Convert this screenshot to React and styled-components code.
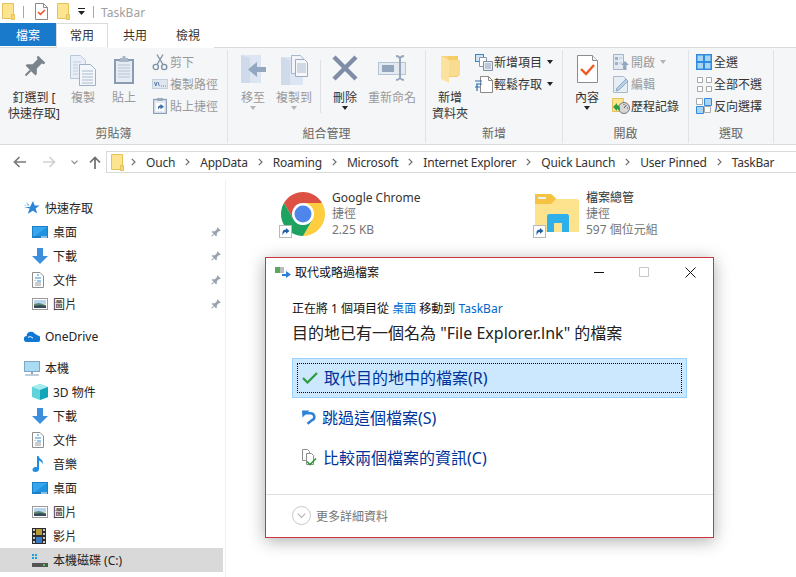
import React from "react";
import styled, { createGlobalStyle } from "styled-components";

const GlobalStyle = createGlobalStyle`
html, body {
  margin: 0;
  padding: 0;
  background: #fff;
  overflow: hidden;
}
body {
  font-family: "Noto Sans", "Noto Sans CJK TC", sans-serif;
  font-size: 12px;
  color: #333;
}
svg { display: block; }
`;

const Page = styled.div`
  position: relative;
  width: 796px;
  height: 577px;
  overflow: hidden;
  display: flex;
  flex-direction: column;
`;

/* title bar */
const TitleBar = styled.div`
  height: 23px;
  display: flex;
  align-items: center;
  padding-left: 2px;
  color: #a0a0a0;
`;
const TitleSep = styled.div`
  width: 1px;
  height: 12px;
  background: #a8a8a8;
  margin: 0 ${(p) => p.$right}px 0 ${(p) => p.$left}px;
`;
const QuickIcon = styled.div`
  margin-right: ${(p) => p.$right}px;
`;
const TitleText = styled.span`
  padding-top: 1px;
`;

/* tabs */
const TabRow = styled.div`
  height: 24px;
  display: flex;
  position: relative;
  z-index: 1;
`;
const FileTab = styled.div`
  width: 56px;
  height: 23px;
  background: #1979ca;
  color: #fff;
  display: flex;
  align-items: center;
  justify-content: center;
`;
const Tab = styled.div`
  width: ${(p) => p.$w}px;
  height: 25px;
  box-sizing: border-box;
  display: flex;
  align-items: center;
  justify-content: center;
  padding-bottom: 2px;
  color: #333;
  background: #fff;
  border: 1px solid ${(p) => (p.$active ? "#dadbdc" : "transparent")};
  border-bottom: 1px solid ${(p) => (p.$active ? "#f5f6f7" : "transparent")};
`;

/* ribbon */
const Ribbon = styled.div`
  height: 98px;
  box-sizing: border-box;
  background: #f5f6f7;
  border-top: 1px solid #dadbdc;
  border-bottom: 1px solid #dadbdc;
  display: flex;
  padding: 2px 0 1px;
`;
const Group = styled.div`
  width: ${(p) => p.$w}px;
  box-sizing: border-box;
  flex: none;
  display: flex;
  flex-direction: column;
  border-right: 1px solid #e1e3e6;
`;
const GroupBody = styled.div`
  flex: 1;
  display: flex;
  padding: 1px 0 0 ${(p) => p.$left || 0}px;
`;
const GroupLabel = styled.div`
  height: 17px;
  line-height: 16px;
  text-align: center;
  color: #666;
`;
const LargeButton = styled.div`
  width: ${(p) => p.$w}px;
  flex: none;
  display: flex;
  flex-direction: column;
  align-items: center;
  padding-top: 4px;
  color: ${(p) => (p.$off ? "#9a9a9a" : "#333")};
`;
const LargeIcon = styled.div`
  height: 35px;
`;
const LargeText = styled.div`
  line-height: 16px;
  white-space: nowrap;
  text-align: center;
`;
const Caret = styled.span`
  display: inline-block;
  width: 0;
  height: 0;
  border-left: 3.5px solid transparent;
  border-right: 3.5px solid transparent;
  border-top: 4px solid ${(p) => (p.$off ? "#b4b4b4" : "#222")};
  margin-left: ${(p) => p.$left || 0}px;
  vertical-align: middle;
`;
const RibbonSep = styled.div`
  width: 1px;
  height: 53px;
  background: #dfe1e4;
  margin: 9px 0 0 10px;
  flex: none;
`;
const SmallColumn = styled.div`
  display: flex;
  flex-direction: column;
`;
const SmallRow = styled.div`
  height: 22px;
  display: flex;
  align-items: center;
  white-space: nowrap;
  color: ${(p) => (p.$off ? "#9a9a9a" : "#333")};
`;
const SmallIcon = styled.div`
  width: 20px;
  flex: none;
  display: flex;
  justify-content: center;
`;

/* address bar */
const AddressRow = styled.div`
  height: 35px;
  display: flex;
  align-items: flex-start;
  padding-top: 6px;
  box-sizing: border-box;
`;
const NavButtons = styled.div`
  width: 106px;
  flex: none;
  height: 22px;
  display: flex;
  align-items: center;
  padding-left: 13px;
  box-sizing: border-box;
`;
const NavIcon = styled.div`
  margin-right: ${(p) => p.$right}px;
`;
const AddressBox = styled.div`
  flex: 1;
  height: 22px;
  box-sizing: border-box;
  border: 1px solid #d9d9d9;
  border-right: 0;
  display: flex;
  align-items: center;
  padding-left: 4px;
`;
const Crumb = styled.span`
  white-space: nowrap;
  color: #333;
  letter-spacing: -0.2px;
`;
const CrumbArrow = styled.div`
  margin: 0 10px 0 ${(p) => p.$left || 10}px;
`;

/* main area */
const Main = styled.div`
  flex: 1;
  display: flex;
  min-height: 0;
`;
const Sidebar = styled.div`
  width: 226px;
  flex: none;
  box-sizing: border-box;
  border-right: 1px solid #f0f0f0;
  padding: 16px 2px 0 0;
  display: flex;
  flex-direction: column;
`;
const NavRow = styled.div`
  height: 24px;
  flex: none;
  display: flex;
  align-items: center;
  padding-left: ${(p) => (p.$sub ? 32 : 24)}px;
  background: ${(p) => (p.$selected ? "#d9d9d9" : "transparent")};
  margin-top: ${(p) => (p.$section ? 8 : 0)}px;
  color: #222;
`;
const NavIconBox = styled.div`
  width: 21px;
  flex: none;
`;
const NavLabel = styled.span`
  flex: 1;
  white-space: nowrap;
`;
const NavPin = styled.div`
  width: 13px;
`;

const Content = styled.div`
  flex: 1;
  display: grid;
  grid-template-columns: 254px 200px;
  align-content: start;
  padding: 12px 0 0 55px;
`;
const Tile = styled.div`
  display: flex;
  gap: 7px;
`;
const TileIcon = styled.div`
  position: relative;
  width: 44px;
  height: 46px;
`;
const ShortcutBadge = styled.div`
  position: absolute;
  left: -2px;
  bottom: 0;
`;
const TileText = styled.div`
  margin-top: -2px;
  line-height: 16px;
  color: #757575;
`;
const TileName = styled.div`
  color: #333;
`;

/* dialog over the explorer window */
const Dialog = styled.div`
  position: absolute;
  left: 265px;
  top: 257px;
  width: 449px;
  height: 281px;
  box-sizing: border-box;
  background: #fff;
  border: 1px solid #c9383f;
  box-shadow: 0 3px 16px rgba(0, 0, 0, 0.32);
  display: flex;
  flex-direction: column;
`;
const DialogTitle = styled.div`
  height: 28px;
  display: flex;
  align-items: center;
  padding-left: 9px;
  color: #111;
`;
const DialogTitleText = styled.span`
  flex: 1;
  margin-left: 4px;
`;
const WindowButton = styled.div`
  width: 14px;
  display: flex;
  justify-content: center;
  margin-right: ${(p) => p.$right}px;
`;
const DialogBody = styled.div`
  flex: 1;
  padding: 14px 26px 0;
  display: flex;
  flex-direction: column;
`;
const StatusLine = styled.div`
  line-height: 18px;
  color: #111;
`;
const LinkText = styled.span`
  color: #0066cc;
`;
const Heading = styled.div`
  margin-top: 4px;
  font-size: 16px;
  line-height: 22px;
  color: #222;
`;
const Options = styled.div`
  margin-top: 14px;
  display: flex;
  flex-direction: column;
`;
const Option = styled.div`
  position: relative;
  height: 40px;
  box-sizing: border-box;
  display: flex;
  align-items: center;
  padding: 0 0 2px 9px;
  gap: 6px;
  font-size: 16px;
  color: #003399;
  background: ${(p) => (p.$active ? "#cce8ff" : "transparent")};
  border: 1px solid ${(p) => (p.$active ? "#99d1ff" : "transparent")};
`;
const FocusRing = styled.div`
  position: absolute;
  inset: 4px;
  border: 1px dotted #000;
`;
const DialogFooter = styled.div`
  height: 43px;
  box-sizing: border-box;
  border-top: 1px solid #dfdfdf;
  display: flex;
  align-items: center;
  padding: 0 0 1px 26px;
  gap: 5px;
  color: #757575;
`;
const MoreCircle = styled.div`
  width: 19px;
  height: 19px;
  box-sizing: border-box;
  border: 1px solid #c8c8c8;
  border-radius: 50%;
  display: flex;
  align-items: center;
  justify-content: center;
`;

/* ---- icons ---- */
const FolderSmall = () => (
  <svg width="13" height="17" viewBox="0 0 13 17">
    <path d="M.5.5h11v15H.5z" fill="#fde590" stroke="#e3c25c" />
    <path d="M9.5 11.5h3v5h-3z" fill="#f7d774" stroke="#e3c25c" />
  </svg>
);
const CheckDoc = () => (
  <svg width="13" height="17" viewBox="0 0 13 17">
    <path d="M.5.5h8l4 4v12H.5z" fill="#fff" stroke="#8a8a8a" />
    <path d="M8.5.5v4h4" fill="none" stroke="#8a8a8a" />
    <path d="M3 9l2.4 2.4L10 7" fill="none" stroke="#e8562a" strokeWidth="1.6" />
  </svg>
);
const QuickDown = () => (
  <svg width="8" height="7" viewBox="0 0 8 7">
    <path d="M0 0h7v1H0z" fill="#222" />
    <path d="M0 3h7L3.5 7z" fill="#222" />
  </svg>
);
const PinIcon = ({ size = 24, color = "#7b838c" }) => (
  <svg width={size} height={size} viewBox="0 0 24 24">
    <g transform="rotate(45 12 12)" fill={color}>
      <path d="M7 1h10v2l-2 1v7l4 4v2H5v-2l4-4V4L7 3z" />
      <path d="M11 17h2v7h-2z" />
    </g>
  </svg>
);
const CopyIcon = () => (
  <svg width="26" height="31" viewBox="0 0 26 31">
    <path d="M.5.5h10l5 5v18H.5z" fill="#e8eef6" stroke="#b9c7d9" />
    <path d="M9.5 9.5h11l5 5v16h-16z" fill="#f3f6fa" stroke="#9fb1c8" />
    <path d="M12 16h11M12 19h11M12 22h11M12 25h11M12 28h11" stroke="#a9bace" />
    <path d="M3 7h8M3 10h5M3 13h5M3 16h5M3 19h5" stroke="#c2cfdf" />
  </svg>
);
const PasteIcon = () => (
  <svg width="22" height="30" viewBox="0 0 22 30">
    <rect x="1" y="4" width="20" height="25" fill="#8a9bb4" />
    <rect x="3" y="6" width="16" height="21" fill="#e6ecf4" />
    <path d="M5 10h12M5 13h12M5 16h12M5 19h12M5 22h12" stroke="#b6c4d6" />
    <path d="M7 5V3h2.5V1h3v2H15v2l1 2H6z" fill="#aab6c7" />
  </svg>
);
const ScissorsIcon = () => (
  <svg width="16" height="17" viewBox="0 0 16 17" fill="none" stroke="#8a97a8" strokeWidth="1.4">
    <circle cx="3.8" cy="13" r="2.6" stroke="#7f90a8" />
    <circle cx="12.2" cy="13" r="2.6" stroke="#7f90a8" />
    <path d="M5 10.6L11 .5M11 10.6L5 .5" />
  </svg>
);
const PathIcon = () => (
  <svg width="16" height="10" viewBox="0 0 16 10">
    <rect x=".5" y=".5" width="15" height="9" fill="#dfe6ef" stroke="#c3cfdd" />
    <path d="M2.5 3l1.3 4L5 3M6 3l1.3 4M9 7h.9M11 7h.9M13 7h.9" stroke="#5c7ea8" fill="none" />
  </svg>
);
const PasteLinkIcon = () => (
  <svg width="14" height="16" viewBox="0 0 14 16">
    <rect x=".5" y="1.5" width="13" height="14" fill="#e6ecf4" stroke="#8fa0b8" strokeWidth="1.4" />
    <path d="M4 0h6v3H4z" fill="#9daabc" />
    <rect x="3" y="5" width="8" height="8" fill="#fff" />
    <path d="M5 12V9.5C5 8 6 7.5 7.5 7.5V6L11 8.7 7.5 11.3V9.6C6.3 9.6 5.8 10.4 5 12z" fill="#3a6ea5" />
  </svg>
);
const MoveIcon = () => (
  <svg width="27" height="28" viewBox="0 0 27 28">
    <path d="M1 0h20v28H1z" fill="#dce5f1" />
    <path d="M1 0l9 3v25H1z" fill="#cfdbeb" />
    <path d="M26 12h-9V7L8 14.5l9 7.5v-5h9z" fill="#93a7c1" />
  </svg>
);
const CopyToIcon = () => (
  <svg width="27" height="30" viewBox="0 0 27 30">
    <path d="M0 2h22v28H0z" fill="#dce5f1" />
    <path d="M0 2l9 3v25H0z" fill="#cfdbeb" />
    <path d="M10.5.5h9l3 3v15h-12z" fill="#f1f4f9" stroke="#a7b7cc" />
    <path d="M14.5 4.5h9l3 3v14h-12z" fill="#f5f7fb" stroke="#98abc4" />
    <path d="M16 9h9M16 11h9M16 13h9M16 15h9M16 17h9" stroke="#a9bace" />
  </svg>
);
const DeleteIcon = () => (
  <svg width="26" height="26" viewBox="0 0 26 26">
    <path d="M2 2l22 22M24 2L2 24" stroke="#7f8ea6" strokeWidth="4.4" />
  </svg>
);
const RenameIcon = () => (
  <svg width="28" height="26" viewBox="0 0 28 26">
    <rect x=".5" y="7.5" width="27" height="12" fill="#e4eaf2" stroke="#b7c4d5" />
    <rect x="4" y="10" width="12" height="7" fill="#93a5bd" />
    <path d="M18 1c2 0 3 .6 4 2 1-1.4 2-2 4-2M22 3v20M18 25c2 0 3-.6 4-2 1 1.4 2 2 4 2" fill="none" stroke="#95a6bc" strokeWidth="2" />
  </svg>
);
const NewFolderIcon = () => (
  <svg width="21" height="28" viewBox="0 0 21 28">
    <path d="M1 1h17v20H8z" fill="#f5d37c" />
    <path d="M18 1v21H8V1z" fill="#f4cd68" />
    <path d="M1 1l8 4v23L1 24z" fill="#fbe39f" />
    <path d="M9 5h11v16H9z" fill="#f8dc8f" />
  </svg>
);
const NewItemIcon = () => (
  <svg width="18" height="17" viewBox="0 0 18 17">
    <rect x=".5" y=".5" width="8" height="7" fill="#cfe4f7" stroke="#3f83c2" />
    <path d="M4.5 3.5h7v9h-7z" fill="#fff" stroke="#8796a8" />
    <path d="M8.5 7.5h9v9h-9z" fill="#e9eef5" stroke="#7f8ea3" />
    <path d="M10 10h6M10 12h6M10 14h6" stroke="#93a3b7" />
  </svg>
);
const EasyAccessIcon = () => (
  <svg width="18" height="17" viewBox="0 0 18 17">
    <path d="M5.5.5h8l4 4v12h-12z" fill="#fff" stroke="#8a8a8a" />
    <path d="M13.5.5v4h4" fill="none" stroke="#8a8a8a" />
    <path d="M0 5h7M1 8h6M0 11h5M2 8v7" stroke="#2a6fb5" strokeWidth="1.2" />
  </svg>
);
const PropertiesIcon = () => (
  <svg width="21" height="28" viewBox="0 0 21 28">
    <path d="M.5.5h15l5 5v22H.5z" fill="#fff" stroke="#8c8c8c" />
    <path d="M15.5.5v5h5" fill="#eee" stroke="#8c8c8c" />
    <path d="M4 14l5 5 8-9" fill="none" stroke="#ee5a24" strokeWidth="2.4" />
  </svg>
);
const OpenIcon = () => (
  <svg width="16" height="16" viewBox="0 0 16 16">
    <path d="M.5.5h10v15H.5z" fill="#e4eaf3" stroke="#a3b3c8" />
    <path d="M2 3h3v3H2zM2 8h3v3H2z" fill="#9fb0c6" />
    <path d="M6 4h3M6 9h3" stroke="#b3c0d1" />
    <path d="M12 7l4 4h-2.5v5h-3v-5H8z" fill="#93a7c1" />
  </svg>
);
const EditIcon = () => (
  <svg width="16" height="17" viewBox="0 0 16 17">
    <path d="M.5.5h10l4 4v12H.5z" fill="#e7edf5" stroke="#a9b9cd" />
    <path d="M3 15l1-3 9-9 2 2-9 9z" fill="#b4d0ea" stroke="#90a6c1" />
  </svg>
);
const HistoryIcon = () => (
  <svg width="18" height="16" viewBox="0 0 18 16">
    <path d="M.5.5h11v13H.5z" fill="#fde590" stroke="#e3c25c" />
    <circle cx="12" cy="10" r="5.5" fill="#d7d7d7" stroke="#7a7a7a" />
    <path d="M12 10l2.5-3M12 6v1M15 10h1" stroke="#555" />
    <path d="M8 11a4 4 0 0 0-3-4V5L1 9l4 4v-2c1 0 2 1 3 2z" fill="#2f9e3f" />
  </svg>
);
const SelectInvert = () => (
  <svg width="16" height="16" viewBox="0 0 16 16" strokeWidth="1">
    <path d="M.5.5h6v6h-6zM8.5 8.5h6v6h-6z" fill="#fff" stroke="#a9a9a9" />
    <path d="M8.5.5h7v7h-7zM.5 8.5h7v7h-7z" fill="#a9d5f5" stroke="#2e8be0" />
  </svg>
);
const SelectAll = () => (
  <svg width="16" height="16" viewBox="0 0 16 16">
    <rect width="16" height="16" fill="#2e8be0" />
    <path d="M1.5 1.5H7V7H1.5zM9 1.5h5.5V7H9zM1.5 9H7v5.5H1.5zM9 9h5.5v5.500H9z" fill="#a9d5f5" />
  </svg>
);
const SelectNone = () => (
  <svg width="15" height="15" viewBox="0 0 15 15" fill="#fff" stroke="#a9a9a9">
    <path d="M.5.5h5v5h-5zM9.5.5h5v5h-5zM.5 9.5h5v5h-5zM9.5 9.5h5v5h-5z" />
  </svg>
);
const ArrowLeft = ({ color = "#7a7a7a", flip }) => (
  <svg width="13" height="12" viewBox="0 0 13 12" style={flip ? { transform: "scaleX(-1)" } : undefined}>
    <path d="M13 6H2M6.5 1l-5 5 5 5" fill="none" stroke={color} strokeWidth="1.7" />
  </svg>
);
const ChevronDown = () => (
  <svg width="7" height="5" viewBox="0 0 7 5">
    <path d="M.5.7l3 3 3-3" fill="none" stroke="#8a8a8a" strokeWidth="1.2" />
  </svg>
);
const ArrowUp = () => (
  <svg width="12" height="13" viewBox="0 0 12 13">
    <path d="M6 13V2M1 6.5l5-5 5 5" fill="none" stroke="#6d6d6d" strokeWidth="1.7" />
  </svg>
);
const CrumbChevron = () => (
  <svg width="5" height="8" viewBox="0 0 5 8">
    <path d="M.8.8L4 4 .8 7.2" fill="none" stroke="#6d6d6d" strokeWidth="1.2" />
  </svg>
);
const StarIcon = () => (
  <svg width="16" height="14" viewBox="0 0 16 14">
    <path d="M9 0l1.7 4.6h4.800l-3.800 3 1.400 5-4.100-2.900-5.300 3 2-5.100L0 6h6z" fill="#2c86d8" />
    <path d="M2 1l4 3.500H3.500zM0 3.500l3 1.500H1z" fill="#7fbcf0" />
  </svg>
);
const DesktopIcon = () => (
  <svg width="16" height="12" viewBox="0 0 16 12">
    <rect width="16" height="12" fill="#1e7fc9" />
    <path d="M1 1h14v9H1z" fill="#36a6ee" />
    <path d="M15 1v9H3z" fill="#1f93de" />
    <path d="M9 11h6" stroke="#fff" />
  </svg>
);
const DownloadIcon = () => (
  <svg width="16" height="16" viewBox="0 0 16 16">
    <path d="M5 0h6v8h5l-8 8-8-8h5z" fill="#3d8fdc" />
  </svg>
);
const DocIcon = () => (
  <svg width="12" height="16" viewBox="0 0 12 16">
    <path d="M.5.5H8L11.500 4v11.500H.5z" fill="#fff" stroke="#8e8e8e" />
    <path d="M5 3h2M3 6h6M5 9h4" stroke="#2e8bd8" />
    <path d="M3 8v1M3 11h6M3 13h6" stroke="#9a9a9a" />
  </svg>
);
const PictureIcon = () => (
  <svg width="16" height="12" viewBox="0 0 16 12">
    <rect x=".5" y=".5" width="15" height="11" fill="#fff" stroke="#9a9a9a" />
    <path d="M2 2h12v4H2z" fill="#b8d5ee" />
    <path d="M2 6l5-1 7 2v3H2z" fill="#5f8a72" />
    <path d="M2 8l6-1 6 1v2H2z" fill="#34495c" />
  </svg>
);
const CloudIcon = () => (
  <svg width="16" height="11" viewBox="0 0 16 11">
    <path d="M3 11a3 3 0 0 1-.4-6A4.500 4.500 0 0 1 11 3a3.600 3.600 0 0 1 2.500 1.600A3.200 3.200 0 0 1 13 11z" fill="#0f78d4" />
    <path d="M4 6.200a4 4 0 0 1 5 1" fill="none" stroke="#fff" />
  </svg>
);
const MonitorIcon = () => (
  <svg width="16" height="15" viewBox="0 0 16 15">
    <rect x=".5" y=".5" width="15" height="10" fill="#a9dbf3" stroke="#7fa6c4" />
    <path d="M7 11h2v2H7z" fill="#8ea7bb" />
    <path d="M1 14h14" stroke="#a4b8c8" strokeWidth="1.4" />
  </svg>
);
const CubeIcon = () => (
  <svg width="16" height="16" viewBox="0 0 16 16">
    <path d="M8 0l8 3v10l-8 3-8-3V3z" fill="#5fd2da" />
    <path d="M8 0l8 3-8 3-8-3z" fill="#a5ecef" />
    <path d="M8 6l8-3v10l-8 3z" fill="#14a5b8" />
  </svg>
);
const NoteIcon = () => (
  <svg width="12" height="16" viewBox="0 0 12 16">
    <path d="M5 0h1.600c.4 3 5.400 3.600 4 8-.4-2-2.400-3-3.600-3.300V13c0 1.800-1.500 3-3.500 3C1.500 16 .5 15 .5 13.700.5 12.200 2 11 3.500 11c.6 0 1.100.1 1.500.3z" fill="#1e8fe0" />
  </svg>
);
const FilmIcon = () => (
  <svg width="14" height="16" viewBox="0 0 14 16">
    <rect width="14" height="16" fill="#2b2b2b" />
    <path d="M1 1h2v2H1zM1 5h2v2H1zM1 9h2v2H1zM1 13h2v2H1zM11 1h2v2h-2zM11 5h2v2h-2zM11 9h2v2h-2zM11 13h2v2h-2z" fill="#c8c8c8" />
    <rect x="4" y="1" width="6" height="6" fill="#b79a35" />
    <rect x="4" y="9" width="6" height="6" fill="#3a78c8" />
  </svg>
);
const DriveIcon = () => (
  <svg width="16" height="16" viewBox="0 0 16 16">
    <path d="M0 2h2v2H0zM3 2h2v2H3zM0 5h2v2H0zM3 5h2v2H3z" fill="#1ba1e2" />
    <path d="M1 11l2-2h11l2 2z" fill="#d5d5d5" />
    <rect y="11" width="16" height="4" fill="#555" />
    <path d="M11 13h2" stroke="#3fd24b" strokeWidth="2" />
  </svg>
);
const ChromeIcon = () => (
  <svg width="44" height="44" viewBox="0 0 44 44">
    <path d="M22 11H41.050A22 22 0 0 0 2.950 11L12.470 27.500A11 11 0 0 1 22 11z" fill="#dd5044" />
    <path d="M41.050 11H22A11 11 0 0 1 31.530 27.500L22 44A22 22 0 0 0 41.050 11z" fill="#ffcd40" />
    <path d="M22 44L31.530 27.500A11 11 0 0 1 12.470 27.500L2.950 11A22 22 0 0 0 22 44z" fill="#1da25f" />
    <circle cx="22" cy="22" r="10.500" fill="#fff" />
    <circle cx="22" cy="22" r="8.500" fill="#4f86ec" />
  </svg>
);
const ExplorerIcon = () => (
  <svg width="44" height="44" viewBox="0 0 44 44">
    <path d="M0 5c0-1 1-2 2-2h16l4 4h20c1 0 2 1 2 2v31H0z" fill="#fee38f" />
    <path d="M0 12V2h16l5 5-5 5z" fill="#f5c242" />
    <path d="M3 5h8v2H3z" fill="#e3f2fb" />
    <path d="M12 40V24c0-1 1-2 2-2h18c1 0 2 1 2 2v16h-7v-9H19v9z" fill="#2fb0ea" />
  </svg>
);
const ShortcutIcon = () => (
  <svg width="13" height="13" viewBox="0 0 13 13">
    <rect x=".5" y=".5" width="12" height="12" fill="#fff" stroke="#b8b8b8" />
    <path d="M3.500 10.500v-3c0-2 1.500-3 3.500-3V3l3.500 3L7 8.800V7c-1.800 0-2.500 1-3.500 3.500z" fill="#1f5fa8" />
  </svg>
);
const ReplaceTitleIcon = () => (
  <svg width="16" height="12" viewBox="0 0 16 12">
    <path d="M0 1h9v6H0z" fill="#5aa85a" />
    <path d="M5 1h4v6H5z" fill="#bcbcbc" />
    <path d="M7 8h4V5l5 3.500L11 12V10H7z" fill="#2a80d8" />
  </svg>
);
const MinimizeIcon = () => (
  <svg width="10" height="1" viewBox="0 0 10 1">
    <path d="M0 .5h10" stroke="#111" />
  </svg>
);
const MaximizeIcon = () => (
  <svg width="10" height="10" viewBox="0 0 10 10">
    <path d="M.5.5h9v9h-9z" fill="none" stroke="#c8c8c8" />
  </svg>
);
const CloseIcon = () => (
  <svg width="11" height="11" viewBox="0 0 11 11">
    <path d="M.5.5l10 10M10.500.5l-10 10" stroke="#111" />
  </svg>
);
const CheckIcon = () => (
  <svg width="16" height="13" viewBox="0 0 16 13">
    <path d="M1 7l4.500 4.500L15 2" fill="none" stroke="#2c9b3c" strokeWidth="2.200" />
  </svg>
);
const SkipIcon = () => (
  <svg width="14" height="15" viewBox="0 0 14 15">
    <path d="M0 .5h7.500L.5 7.500z" fill="#2d83d6" />
    <path d="M3 3.200h5.500a3.600 3.600 0 0 1 1.600 6.900L5.500 13.800" fill="none" stroke="#2d83d6" strokeWidth="2.600" />
  </svg>
);
const CompareIcon = () => (
  <svg width="15" height="17" viewBox="0 0 15 17">
    <path d="M.5.5h5l2 2v9h-7z" fill="#fff" stroke="#8e8e8e" />
    <path d="M4.500 4.500h5l2 2v9h-7z" fill="#fff" stroke="#8e8e8e" />
    <path d="M5 12.500l3 3 6-6" fill="none" stroke="#2c9b3c" strokeWidth="1.600" />
  </svg>
);
const MoreChevron = () => (
  <svg width="9" height="6" viewBox="0 0 9 6">
    <path d="M.7.7l3.800 3.800L8.300.7" fill="none" stroke="#b5b5b5" strokeWidth="1.200" />
  </svg>
);

const crumbs = ["Ouch", "AppData", "Roaming", "Microsoft", "Internet Explorer", "Quick Launch", "User Pinned", "TaskBar"];

const quickAccess = [
  { label: "桌面", icon: <DesktopIcon /> },
  { label: "下載", icon: <DownloadIcon /> },
  { label: "文件", icon: <DocIcon /> },
  { label: "圖片", icon: <PictureIcon /> },
];
const thisPc = [
  { label: "3D 物件", icon: <CubeIcon /> },
  { label: "下載", icon: <DownloadIcon /> },
  { label: "文件", icon: <DocIcon /> },
  { label: "音樂", icon: <NoteIcon /> },
  { label: "桌面", icon: <DesktopIcon /> },
  { label: "圖片", icon: <PictureIcon /> },
  { label: "影片", icon: <FilmIcon /> },
];

const App = () => {
  return (
    <Page>
      <GlobalStyle />
      <TitleBar>
        <FolderSmall />
        <TitleSep $left={8} $right={11} />
        <QuickIcon $right={9}><CheckDoc /></QuickIcon>
        <QuickIcon $right={8}><FolderSmall /></QuickIcon>
        <QuickDown />
        <TitleSep $left={7} $right={7} />
        <TitleText>TaskBar</TitleText>
      </TitleBar>

      <TabRow>
        <FileTab>檔案</FileTab>
        <Tab $w={52} $active>常用</Tab>
        <Tab $w={54}>共用</Tab>
        <Tab $w={52}>檢視</Tab>
      </TabRow>

      <Ribbon>
        <Group $w={228}>
          <GroupBody>
            <LargeButton $w={68}>
              <LargeIcon><PinIcon /></LargeIcon>
              <LargeText>釘選到 [<br />快速存取]</LargeText>
            </LargeButton>
            <LargeButton $w={30} $off>
              <LargeIcon><CopyIcon /></LargeIcon>
              <LargeText>複製</LargeText>
            </LargeButton>
            <LargeButton $w={52} $off>
              <LargeIcon><PasteIcon /></LargeIcon>
              <LargeText>貼上</LargeText>
            </LargeButton>
            <SmallColumn>
              <SmallRow $off><SmallIcon><ScissorsIcon /></SmallIcon>剪下</SmallRow>
              <SmallRow $off><SmallIcon><PathIcon /></SmallIcon>複製路徑</SmallRow>
              <SmallRow $off><SmallIcon><PasteLinkIcon /></SmallIcon>貼上捷徑</SmallRow>
            </SmallColumn>
          </GroupBody>
          <GroupLabel>剪貼簿</GroupLabel>
        </Group>

        <Group $w={198}>
          <GroupBody>
            <LargeButton $w={50} $off>
              <LargeIcon><MoveIcon /></LargeIcon>
              <LargeText>移至</LargeText>
              <Caret $off />
            </LargeButton>
            <LargeButton $w={32} $off>
              <LargeIcon><CopyToIcon /></LargeIcon>
              <LargeText>複製到</LargeText>
              <Caret $off />
            </LargeButton>
            <RibbonSep />
            <LargeButton $w={48}>
              <LargeIcon><DeleteIcon /></LargeIcon>
              <LargeText>刪除</LargeText>
              <Caret />
            </LargeButton>
            <LargeButton $w={46} $off>
              <LargeIcon><RenameIcon /></LargeIcon>
              <LargeText>重新命名</LargeText>
            </LargeButton>
          </GroupBody>
          <GroupLabel>組合管理</GroupLabel>
        </Group>

        <Group $w={137}>
          <GroupBody>
            <LargeButton $w={48}>
              <LargeIcon><NewFolderIcon /></LargeIcon>
              <LargeText>新增<br />資料夾</LargeText>
            </LargeButton>
            <SmallColumn>
              <SmallRow><SmallIcon><NewItemIcon /></SmallIcon>新增項目<Caret $left={5} /></SmallRow>
              <SmallRow><SmallIcon><EasyAccessIcon /></SmallIcon>輕鬆存取<Caret $left={5} /></SmallRow>
            </SmallColumn>
          </GroupBody>
          <GroupLabel>新增</GroupLabel>
        </Group>

        <Group $w={126}>
          <GroupBody>
            <LargeButton $w={48}>
              <LargeIcon><PropertiesIcon /></LargeIcon>
              <LargeText>內容</LargeText>
              <Caret />
            </LargeButton>
            <SmallColumn>
              <SmallRow $off><SmallIcon><OpenIcon /></SmallIcon>開啟<Caret $off $left={5} /></SmallRow>
              <SmallRow $off><SmallIcon><EditIcon /></SmallIcon>編輯</SmallRow>
              <SmallRow><SmallIcon><HistoryIcon /></SmallIcon>歷程記錄</SmallRow>
            </SmallColumn>
          </GroupBody>
          <GroupLabel>開啟</GroupLabel>
        </Group>

        <Group $w={85}>
          <GroupBody $left={5}>
            <SmallColumn>
              <SmallRow><SmallIcon><SelectAll /></SmallIcon>全選</SmallRow>
              <SmallRow><SmallIcon><SelectNone /></SmallIcon>全部不選</SmallRow>
              <SmallRow><SmallIcon><SelectInvert /></SmallIcon>反向選擇</SmallRow>
            </SmallColumn>
          </GroupBody>
          <GroupLabel>選取</GroupLabel>
        </Group>
      </Ribbon>

      <AddressRow>
        <NavButtons>
          <NavIcon $right={17}><ArrowLeft /></NavIcon>
          <NavIcon $right={15}><ArrowLeft color="#d2d2d2" flip /></NavIcon>
          <NavIcon $right={11}><ChevronDown /></NavIcon>
          <NavIcon $right={0}><ArrowUp /></NavIcon>
        </NavButtons>
        <AddressBox>
          <FolderSmall />
          {crumbs.map((name, idx) => (
            <React.Fragment key={name}>
              <CrumbArrow $left={idx === 0 ? 7 : 10}><CrumbChevron /></CrumbArrow>
              <Crumb>{name}</Crumb>
            </React.Fragment>
          ))}
        </AddressBox>
      </AddressRow>

      <Main>
        <Sidebar>
          <NavRow>
            <NavIconBox><StarIcon /></NavIconBox>
            <NavLabel>快速存取</NavLabel>
          </NavRow>
          {quickAccess.map((item) => (
            <NavRow $sub key={item.label}>
              <NavIconBox>{item.icon}</NavIconBox>
              <NavLabel>{item.label}</NavLabel>
              <NavPin><PinIcon size={11} color="#9aa3ad" /></NavPin>
            </NavRow>
          ))}
          <NavRow $section>
            <NavIconBox><CloudIcon /></NavIconBox>
            <NavLabel>OneDrive</NavLabel>
          </NavRow>
          <NavRow $section>
            <NavIconBox><MonitorIcon /></NavIconBox>
            <NavLabel>本機</NavLabel>
          </NavRow>
          {thisPc.map((item) => (
            <NavRow $sub key={item.label + "pc"}>
              <NavIconBox>{item.icon}</NavIconBox>
              <NavLabel>{item.label}</NavLabel>
            </NavRow>
          ))}
          <NavRow $sub $selected>
            <NavIconBox><DriveIcon /></NavIconBox>
            <NavLabel>本機磁碟 (C:)</NavLabel>
          </NavRow>
        </Sidebar>

        <Content>
          <Tile>
            <TileIcon>
              <ChromeIcon />
              <ShortcutBadge><ShortcutIcon /></ShortcutBadge>
            </TileIcon>
            <TileText>
              <TileName>Google Chrome</TileName>
              <div>捷徑</div>
              <div>2.25 KB</div>
            </TileText>
          </Tile>
          <Tile>
            <TileIcon>
              <ExplorerIcon />
              <ShortcutBadge><ShortcutIcon /></ShortcutBadge>
            </TileIcon>
            <TileText>
              <TileName>檔案總管</TileName>
              <div>捷徑</div>
              <div>597 個位元組</div>
            </TileText>
          </Tile>
        </Content>
      </Main>

      <Dialog>
        <DialogTitle>
          <ReplaceTitleIcon />
          <DialogTitleText>取代或略過檔案</DialogTitleText>
          <WindowButton $right={31}><MinimizeIcon /></WindowButton>
          <WindowButton $right={32}><MaximizeIcon /></WindowButton>
          <WindowButton $right={16}><CloseIcon /></WindowButton>
        </DialogTitle>
        <DialogBody>
          <StatusLine>
            正在將 1 個項目從 <LinkText>桌面</LinkText> 移動到 <LinkText>TaskBar</LinkText>
          </StatusLine>
          <Heading>目的地已有一個名為 "File Explorer.lnk" 的檔案</Heading>
          <Options>
            <Option $active>
              <FocusRing />
              <CheckIcon />
              取代目的地中的檔案(R)
            </Option>
            <Option>
              <SkipIcon />
              跳過這個檔案(S)
            </Option>
            <Option>
              <CompareIcon />
              比較兩個檔案的資訊(C)
            </Option>
          </Options>
        </DialogBody>
        <DialogFooter>
          <MoreCircle><MoreChevron /></MoreCircle>
          更多詳細資料
        </DialogFooter>
      </Dialog>
    </Page>
  );
};

export default App;
